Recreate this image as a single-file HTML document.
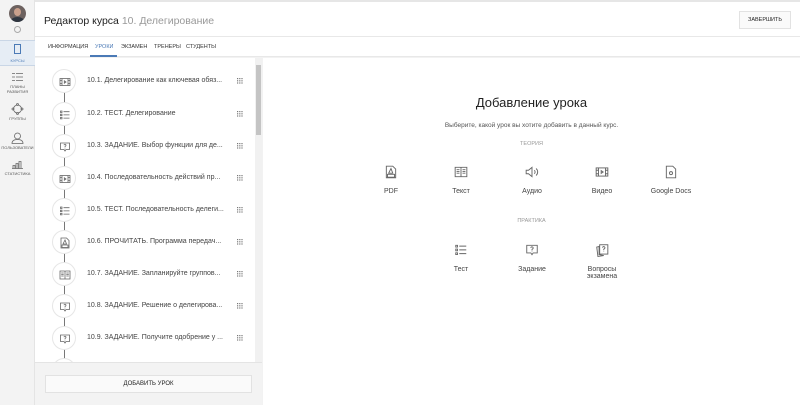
<!DOCTYPE html><html><head><meta charset="utf-8"><style>
*{margin:0;padding:0;box-sizing:border-box}
body{width:800px;height:405px;overflow:hidden;background:#f2f2f2;font-family:"Liberation Sans","Noto Sans CJK SC",sans-serif;color:#333;position:relative}
.a{position:absolute}
.side{left:0;top:0;width:35px;height:405px;background:#f3f3f3;border-right:1px solid #e4e4e4}
.nav{position:absolute;left:0;width:35px;text-align:center;font-size:4px;color:#555;line-height:5px}
.hdr{left:35px;top:0;width:765px;height:37px;background:#fff;border-bottom:1px solid #e8e8e8;border-top:2px solid #e6e6e6}
.tabs{left:35px;top:37px;width:765px;height:20px;background:#fff;border-bottom:1px solid #e8e8e8;font-size:5.5px;color:#333}
.tabs span{position:absolute;top:7px}
.list{left:35px;top:58px;width:220px;height:304px;background:#fff;overflow:hidden}
.it{position:absolute;left:0;width:220px;height:32px}
.c{position:absolute;left:17px;top:4px;width:24px;height:24px;border-radius:50%;border:1px solid #e6e6e6;background:#fff}
.c svg{position:absolute;left:6px;top:6px}
.t{position:absolute;left:52px;top:12px;font-size:7px;color:#444;white-space:nowrap}
.d{position:absolute;left:202px;top:13px}
.ln{position:absolute;left:29px;width:1px;background:#777}
.right{left:263px;top:58px;width:537px;height:347px;background:#fff}
.ic{position:absolute;text-align:center;font-size:7px;color:#444;width:70px}
.ic svg{display:block;margin:0 auto}
svg{fill:none;stroke:#666;stroke-width:.8}
</style></head><body>
<svg width="0" height="0" style="position:absolute">
<defs>
<g id="dots" style="fill:#777;stroke:none"><rect x="0" y="0" width="1.2" height="1.2"/><rect x="2.2" y="0" width="1.2" height="1.2"/><rect x="4.4" y="0" width="1.2" height="1.2"/><rect x="0" y="2.2" width="1.2" height="1.2"/><rect x="2.2" y="2.2" width="1.2" height="1.2"/><rect x="4.4" y="2.2" width="1.2" height="1.2"/><rect x="0" y="4.4" width="1.2" height="1.2"/><rect x="2.2" y="4.4" width="1.2" height="1.2"/><rect x="4.4" y="4.4" width="1.2" height="1.2"/></g>
<g id="vid"><rect x="1" y="2.5" width="10" height="7"/><path d="M3 2.5v7M9 2.5v7M1 4.5h2M1 7.5h2M9 4.5h2M9 7.5h2M5.3 4.8v2.4l1.7-1.2z"/></g>
<g id="test"><path d="M1.5 2h1.5v1.5h-1.5zM1.5 5.2h1.5v1.5h-1.5zM1.5 8.4h1.5v1.5h-1.5zM4.5 2.7h6M4.5 5.9h6M4.5 9.1h6"/></g>
<g id="task"><path d="M1.5 2h9v6.5h-3.5l-1 1.5-1-1.5h-3.5z"/><path d="M5 4.2a1 1 0 1 1 1.3 1l-.3.4v.8M6 7.3v.3"/></g>
<g id="pdf"><path d="M2 1h5.5l2.5 2.5v7.5h-8z"/><path d="M3 8h6v2.5h-6zM6 3l-2 4h3.5z"/></g>
<g id="book"><path d="M1 2h4.5l.5.5.5-.5h4.5v8h-10zM6 2.5v7.5M2.2 4h2.5M2.2 5.5h2.5M2.2 7h2.5M7.3 4h2.5M7.3 5.5h2.5M7.3 7h2.5"/></g>
</defs></svg>
<div class="a side">
<div class="a" style="left:9px;top:5px;width:17px;height:17px;border-radius:50%;background:#6d6260;overflow:hidden"><div style="position:absolute;left:5px;top:3px;width:7px;height:8px;border-radius:50%;background:#c9a08c"></div><div style="position:absolute;left:2px;top:12px;width:13px;height:8px;border-radius:50%;background:#2f3640"></div></div>
<div class="a" style="left:14px;top:26px;width:7px;height:7px;border-radius:50%;border:1px solid #aaa"></div>
<div class="a" style="left:0;top:40px;width:35px;height:26px;background:#e6edf5;border-top:1px solid #c9d6e6;border-bottom:1px solid #c9d6e6"></div>
<div class="a" style="left:14px;top:44px;width:7px;height:10px;border:1px solid #4b7ab6"></div>
<div class="nav" style="top:58px;color:#4b7ab6">КУРСЫ</div>
<svg class="a" style="left:11px;top:72px" width="13" height="11"><path d="M1 1.5h3M5 1.5h7M1 5h3M5 5h7M1 8.5h3M5 8.5h7"/></svg>
<div class="nav" style="top:84px">ПЛАНЫ<br>РАЗВИТИЯ</div>
<svg class="a" style="left:11px;top:103px" width="13" height="12"><circle cx="6.5" cy="6" r="4"/><circle cx="6.5" cy="1.5" r="1"/><circle cx="2" cy="6" r="1"/><circle cx="11" cy="6" r="1"/><circle cx="6.5" cy="10.5" r="1"/></svg>
<div class="nav" style="top:116px">ГРУППЫ</div>
<svg class="a" style="left:11px;top:132px" width="13" height="12"><circle cx="6.5" cy="4" r="3"/><path d="M1 11.5c0-3 2.5-4 5.5-4s5.5 1 5.5 4z"/></svg>
<div class="nav" style="top:145px">ПОЛЬЗОВАТЕЛИ</div>
<svg class="a" style="left:11px;top:159px" width="13" height="10"><path d="M1 9.5h11M2 9.5v-3h2v3M5 9.5v-5h2v5M8 9.5v-7h2v7"/></svg>
<div class="nav" style="top:171px">СТАТИСТИКА</div>
</div>
<div class="a hdr">
<div class="a" style="left:9px;top:13px;font-size:10.5px;color:#222">Редактор курса <span style="color:#999">10. Делегирование</span></div>
<div class="a" style="left:704px;top:9px;width:52px;height:18px;border:1px solid #e2e2e2;background:#fafafa;font-size:5.5px;text-align:center;line-height:16px;color:#222">ЗАВЕРШИТЬ</div>
</div>
<div class="a tabs">
<span style="left:13px">ИНФОРМАЦИЯ</span>
<span style="left:60px;color:#4b7ab6">УРОКИ</span>
<div class="a" style="left:55px;top:18px;width:27px;height:2px;background:#4b7ab6"></div>
<span style="left:86px">ЭКЗАМЕН</span>
<span style="left:119px">ТРЕНЕРЫ</span>
<span style="left:151px">СТУДЕНТЫ</span>
</div>
<div class="a list">
<div class="ln" style="top:30px;height:280px"></div>
<div class="it" style="top:7px"><div class="c"><svg width="12" height="12"><use href="#vid"/></svg></div><div class="t">10.1. Делегирование как ключевая обяз...</div><svg class="d" width="6" height="6"><use href="#dots"/></svg></div>
<div class="it" style="top:40px"><div class="c"><svg width="12" height="12"><use href="#test"/></svg></div><div class="t">10.2. ТЕСТ. Делегирование</div><svg class="d" width="6" height="6"><use href="#dots"/></svg></div>
<div class="it" style="top:72px"><div class="c"><svg width="12" height="12"><use href="#task"/></svg></div><div class="t">10.3. ЗАДАНИЕ. Выбор функции для де...</div><svg class="d" width="6" height="6"><use href="#dots"/></svg></div>
<div class="it" style="top:104px"><div class="c"><svg width="12" height="12"><use href="#vid"/></svg></div><div class="t">10.4. Последовательность действий пр...</div><svg class="d" width="6" height="6"><use href="#dots"/></svg></div>
<div class="it" style="top:136px"><div class="c"><svg width="12" height="12"><use href="#test"/></svg></div><div class="t">10.5. ТЕСТ. Последовательность делеги...</div><svg class="d" width="6" height="6"><use href="#dots"/></svg></div>
<div class="it" style="top:168px"><div class="c"><svg width="12" height="12"><use href="#pdf"/></svg></div><div class="t">10.6. ПРОЧИТАТЬ. Программа передач...</div><svg class="d" width="6" height="6"><use href="#dots"/></svg></div>
<div class="it" style="top:200px"><div class="c"><svg width="12" height="12"><use href="#book"/></svg></div><div class="t">10.7. ЗАДАНИЕ. Запланируйте группов...</div><svg class="d" width="6" height="6"><use href="#dots"/></svg></div>
<div class="it" style="top:232px"><div class="c"><svg width="12" height="12"><use href="#task"/></svg></div><div class="t">10.8. ЗАДАНИЕ. Решение о делегирова...</div><svg class="d" width="6" height="6"><use href="#dots"/></svg></div>
<div class="it" style="top:264px"><div class="c"><svg width="12" height="12"><use href="#task"/></svg></div><div class="t">10.9. ЗАДАНИЕ. Получите одобрение у ...</div><svg class="d" width="6" height="6"><use href="#dots"/></svg></div>
<div class="it" style="top:296px"><div class="c"></div></div>
</div>
<div class="a" style="left:255px;top:58px;width:7px;height:304px;background:#f1f1f1"></div>
<div class="a" style="left:256px;top:65px;width:5px;height:70px;background:#c4c4c4"></div>
<div class="a" style="left:35px;top:362px;width:227px;height:43px;background:#f3f3f3;border-top:1px solid #e4e4e4"></div>
<div class="a" style="left:45px;top:375px;width:207px;height:18px;background:#fafafa;border:1px solid #e2e2e2;font-size:6px;text-align:center;line-height:16px;color:#222">ДОБАВИТЬ УРОК</div>
<div class="a right">
<div class="a" style="left:0;top:37px;width:537px;text-align:center;font-size:13px;color:#222">Добавление урока</div>
<div class="a" style="left:0;top:64px;width:537px;text-align:center;font-size:6.5px;color:#555">Выберите, какой урок вы хотите добавить в данный курс.</div>
<div class="a" style="left:0;top:83px;width:537px;text-align:center;font-size:5.5px;color:#999">ТЕОРИЯ</div>
<div class="a" style="left:0;top:160px;width:537px;text-align:center;font-size:5.5px;color:#999">ПРАКТИКА</div>
<div class="ic" style="left:93px;top:107px"><svg width="14" height="14" viewBox="0 0 12 12"><use href="#pdf"/></svg><div style="margin-top:9px">PDF</div></div>
<div class="ic" style="left:163px;top:107px"><svg width="14" height="14" viewBox="0 0 12 12"><use href="#book"/></svg><div style="margin-top:9px">Текст</div></div>
<div class="ic" style="left:234px;top:107px"><svg width="14" height="14" viewBox="0 0 12 12"><path d="M1 4.5h2l3-2.5v8l-3-2.5h-2zM8 4.5a2 2 0 0 1 0 3M9.5 3a4 4 0 0 1 0 6"/></svg><div style="margin-top:9px">Аудио</div></div>
<div class="ic" style="left:304px;top:107px"><svg width="14" height="14" viewBox="0 0 12 12"><use href="#vid"/></svg><div style="margin-top:9px">Видео</div></div>
<div class="ic" style="left:373px;top:107px"><svg width="14" height="14" viewBox="0 0 12 12"><path d="M2 1h5.5l2.5 2.5v7.5h-8z"/><circle cx="6" cy="7" r="1.3"/></svg><div style="margin-top:9px">Google Docs</div></div>
<div class="ic" style="left:163px;top:185px"><svg width="14" height="14" viewBox="0 0 12 12"><use href="#test"/></svg><div style="margin-top:9px">Тест</div></div>
<div class="ic" style="left:234px;top:185px"><svg width="14" height="14" viewBox="0 0 12 12"><use href="#task"/></svg><div style="margin-top:9px">Задание</div></div>
<div class="ic" style="left:304px;top:185px"><svg width="14" height="14" viewBox="0 0 12 12"><path d="M1.5 3.5l2-.5v7l4 .8-5 .7z"/><rect x="4" y="1.5" width="7" height="8"/><path d="M6.5 4a1 1 0 1 1 1.3 1l-.3.4v.8M7.5 7.3v.3"/></svg><div style="margin-top:9px">Вопросы<br>экзамена</div></div>
</div>
</body></html>
